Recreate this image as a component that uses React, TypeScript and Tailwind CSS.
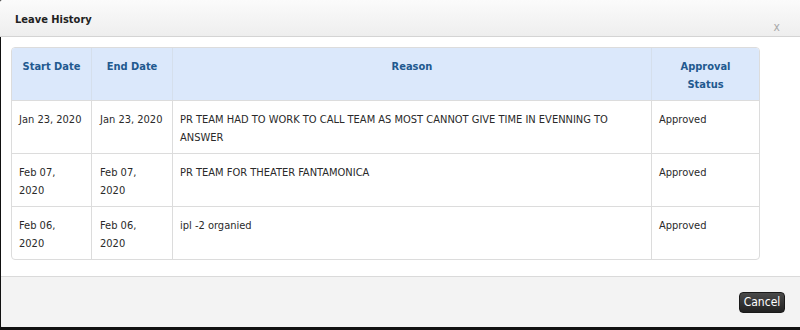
const rows = [
  {
    start: ["Jan 23, 2020"],
    end: ["Jan 23, 2020"],
    reason:
      "PR TEAM HAD TO WORK TO CALL TEAM AS MOST CANNOT GIVE TIME IN EVENNING TO ANSWER",
    status: "Approved",
  },
  {
    start: ["Feb 07,", "2020"],
    end: ["Feb 07,", "2020"],
    reason: "PR TEAM FOR THEATER FANTAMONICA",
    status: "Approved",
  },
  {
    start: ["Feb 06,", "2020"],
    end: ["Feb 06,", "2020"],
    reason: "ipl -2 organied",
    status: "Approved",
  },
];

const cols = "grid grid-cols-[79px_81px_479px_108px]";

function Lines({ parts }: { parts: string[] }) {
  return (
    <>
      {parts.map((p, i) => (
        <div key={i}>{p}</div>
      ))}
    </>
  );
}

export default function App() {
  return (
    <div
      className="w-[800px] h-[330px] bg-[#111] flex flex-col overflow-hidden"
      style={{ fontFamily: '"DejaVu Sans Condensed", "DejaVu Sans", sans-serif' }}
    >
      {/* Header */}
      <div className="h-[37px] shrink-0 flex items-stretch justify-between bg-gradient-to-b from-[#fbfbfb] to-[#eeeeee] border-b border-[#d4d4d4] rounded-tl-[2px]">
        <h3 className="pl-[15px] pt-[11px] text-[11px] leading-[18px] font-bold text-[#222]">
          Leave History
        </h3>
        <span className="pr-[20px] pt-[18px] text-[12px] leading-[18px] text-[#aaa]">x</span>
      </div>

      <div className="ml-[1px] flex-1 flex flex-col rounded-bl-[4px] overflow-hidden">
        {/* Body */}
        <div className="h-[239px] shrink-0 bg-white pt-[10px] pl-[10px]">
          <div className="w-[749px] border border-[#dcdcdc] rounded-[4px] overflow-hidden text-[11px] leading-[18px] text-[#2a2a2a]">
            <div className={`${cols} h-[52px] bg-[#dbe8fb] font-bold text-[#22598f] text-center`}>
              <div className="pt-[10px] px-[7px]">Start Date</div>
              <div className="pt-[10px] px-[7px] border-l border-[#d5dfec]">End Date</div>
              <div className="pt-[10px] px-[7px] border-l border-[#d5dfec]">Reason</div>
              <div className="pt-[10px] px-[16px] border-l border-[#d5dfec]">Approval Status</div>
            </div>
            {rows.map((r, i) => (
              <div key={i} className={`${cols} h-[53px] border-t border-[#dcdcdc]`}>
                <div className="pt-[10px] pl-[7px] pr-[6px]">
                  <Lines parts={r.start} />
                </div>
                <div className="pt-[10px] pl-[8px] pr-[6px] border-l border-[#dcdcdc]">
                  <Lines parts={r.end} />
                </div>
                <div className="pt-[10px] px-[7px] border-l border-[#dcdcdc]">{r.reason}</div>
                <div className="pt-[10px] px-[7px] border-l border-[#dcdcdc]">{r.status}</div>
              </div>
            ))}
          </div>
        </div>

        {/* Footer */}
        <div className="h-[51px] shrink-0 bg-[#f3f3f3] border-t border-[#dadada] flex items-center justify-end pr-[15px]">
          <button className="w-[46px] h-[21px] rounded-[4px] bg-gradient-to-b from-[#4a4a4a] to-[#222] border border-[#1a1a1a] text-white text-[12px] leading-none">
            Cancel
          </button>
        </div>
      </div>
    </div>
  );
}
